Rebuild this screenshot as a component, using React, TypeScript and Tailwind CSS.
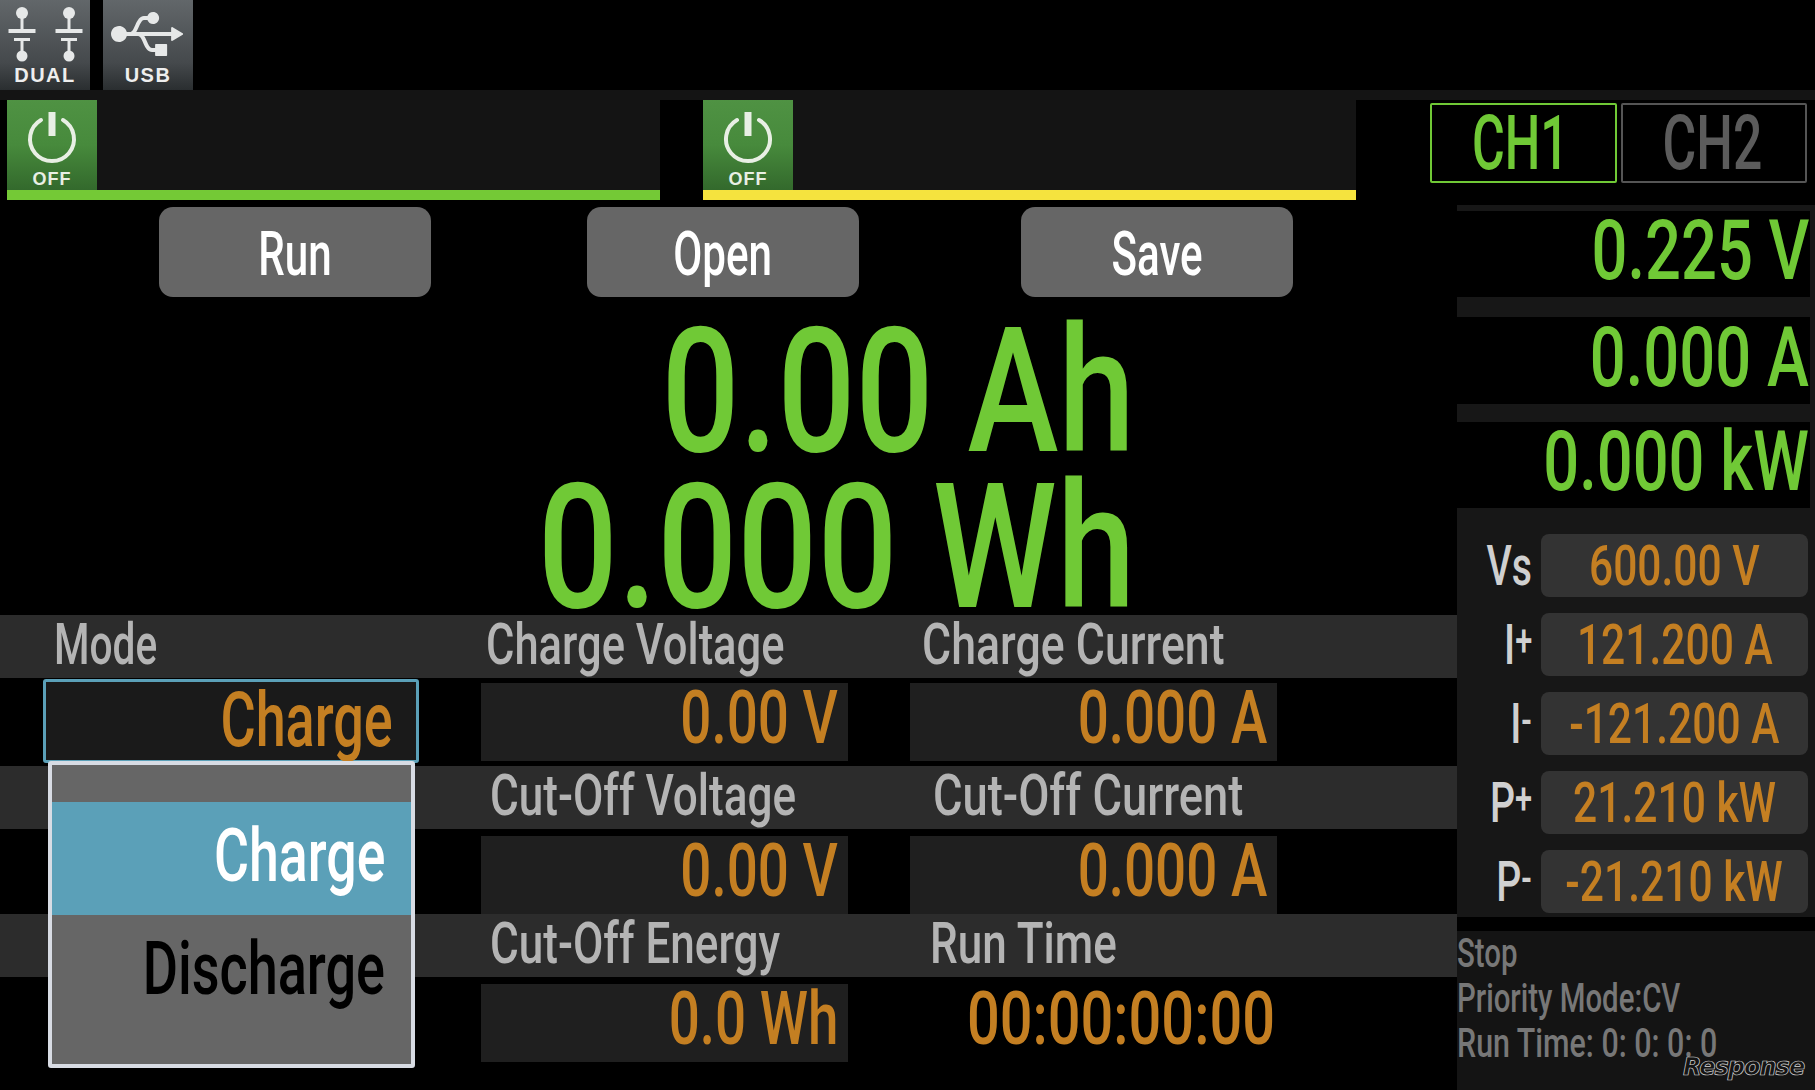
import type { ReactNode } from 'react';
import { FaUsb } from 'react-icons/fa';

const font = "font-['Roboto','Liberation_Sans',sans-serif]";

function Txt({ children, className = '' }: { children: ReactNode; className?: string }) {
  return <span className={`inline-block whitespace-nowrap font-medium ${font} ${className}`}>{children}</span>;
}

function PowerIcon() {
  return (
    <svg viewBox="0 0 56 60" className="w-[56px] h-[60px]" fill="none" stroke="#e8efe4" strokeLinecap="round">
      <path d="M17 11 A22 22 0 1 0 39 11" strokeWidth="4" />
      <path d="M28 3 V27" strokeWidth="7" strokeLinecap="butt" />
    </svg>
  );
}

function DualIcon() {
  const pole = (x: number) => (
    <g fill="#e6e8e8">
      <circle cx={x} cy={13} r={6} />
      <rect x={x - 1.5} y={14} width={3} height={17} />
      <rect x={x - 13.5} y={29} width={27} height={4} />
      <rect x={x - 8} y={38} width={16} height={3} />
      <rect x={x - 1.5} y={40} width={3} height={14} />
      <circle cx={x} cy={56} r={5.5} />
    </g>
  );
  return (
    <svg viewBox="0 0 90 68" className="absolute left-0 top-0 w-[90px] h-[68px]">
      {pole(22)}
      {pole(69)}
    </svg>
  );
}

function ModeButton({ label, icon, className = '' }: { label: string; icon: ReactNode; className?: string }) {
  return (
    <div className={`relative w-[90px] h-[90px] bg-gradient-to-b from-[#62676a] via-[#45494c] via-70% to-[#2a2e30] flex flex-col items-center justify-end pb-[3px] ${className}`}>
      {icon}
      <span className="font-['Liberation_Sans',sans-serif] font-bold text-[20px] leading-[24px] tracking-[1.5px] text-[#eeeeee]">{label}</span>
    </div>
  );
}

function ChannelBar({ barColor }: { barColor: string }) {
  return (
    <div className="w-[653px] h-[100px] flex flex-col">
      <div className="h-[90px] bg-[#141414]">
        <div className="w-[90px] h-[90px] bg-gradient-to-b from-[#4f9243] via-[#478a3c] to-[#33692c] flex flex-col items-center pt-[9px]">
          <PowerIcon />
          <span className="font-['Liberation_Sans',sans-serif] font-bold text-[18px] leading-[18px] tracking-[1px] text-[#e8efe4] mt-[1px]">OFF</span>
        </div>
      </div>
      <div className={`h-[10px] ${barColor}`} />
    </div>
  );
}

function ActionButton({ label, className = '' }: { label: string; className?: string }) {
  return (
    <div className={`w-[272px] h-[90px] rounded-[14px] bg-[#666666] flex items-center justify-center pt-[3px] ${className}`}>
      <Txt className="text-[62px] leading-none text-white scale-x-[.68]">{label}</Txt>
    </div>
  );
}

function BandRow({ cells }: { cells: { label: string; className: string; scale: string }[] }) {
  return (
    <div className="h-[63px] bg-[#2c2c2c] relative flex items-center">
      {cells.map((c) => (
        <div key={c.label} className={`shrink-0 flex ${c.className}`}>
          <Txt className={`origin-left ${c.scale} text-[58px] leading-[61px] text-[#b4b4b4] -translate-y-[2px]`}>{c.label}</Txt>
        </div>
      ))}
    </div>
  );
}

function ValueBox({ value, boxed = true }: { value: string; boxed?: boolean }) {
  return (
    <div className={`w-[367px] h-[78px] flex items-center justify-end ${boxed ? 'bg-[#1f1f1f] pr-[10px]' : 'pr-[2px]'}`}>
      <Txt className={`origin-right ${boxed ? 'scale-x-[.74]' : 'scale-x-[.78]'} text-[74px] leading-none text-[#c47f22] -translate-y-[4px]`}>{value}</Txt>
    </div>
  );
}

function Readout({ value, className = '' }: { value: string; className?: string }) {
  return (
    <div className={`w-[353px] h-[86px] bg-black flex items-center justify-end pr-[1px] ${className}`}>
      <Txt className="origin-right scale-x-[.753] text-[84px] leading-none text-[#70c936] -translate-y-[3px]">{value}</Txt>
    </div>
  );
}

function LimitRow({ label, sign, value }: { label: string; sign?: string; value: string }) {
  return (
    <div className="h-[63px] flex items-center">
      <div className="w-[75px] flex justify-end">
        <Txt className="origin-right scale-x-[.7] text-[56px] leading-none text-[#d0d0d0]">
          {label}
          {sign && <span className="text-[44px] align-[8px]">{sign}</span>}
        </Txt>
      </div>
      <div className="ml-[9px] w-[267px] h-[63px] rounded-[8px] bg-[#333333] flex items-center justify-center">
        <Txt className="scale-x-[.76] text-[56px] leading-none text-[#c47f22]">{value}</Txt>
      </div>
    </div>
  );
}

export default function App() {
  return (
    <div className="w-[1815px] h-[1090px] bg-black overflow-hidden flex flex-col">
      <div className="h-[90px] flex gap-[13px] shrink-0">
        <ModeButton label="DUAL" icon={<DualIcon />} />
        <ModeButton label="USB" icon={<FaUsb className="absolute left-[8px] top-[-2px] w-[72px] h-[72px] text-[#e6e8e8]" />} />
      </div>
      <div className="h-[10px] bg-[#141414] shrink-0" />

      <div className="flex flex-1">
        {/* left side */}
        <div className="w-[1457px] shrink-0 flex flex-col">
          <div className="h-[100px] pl-[7px] flex gap-[43px]">
            <ChannelBar barColor="bg-[#74c936]" />
            <ChannelBar barColor="bg-[#f5e33e]" />
          </div>
          <div className="mt-[7px] h-[90px] pl-[159px] flex">
            <ActionButton label="Run" />
            <ActionButton label="Open" className="ml-[156px]" />
            <ActionButton label="Save" className="ml-[162px]" />
          </div>
          <div className="h-[318px] pt-[17px] pr-[322px] flex flex-col items-end">
            <Txt className="origin-right scale-x-[.784] text-[175px] leading-[156px] text-[#70c936]">0.00 Ah</Txt>
            <Txt className="origin-right scale-x-[.806] text-[175px] leading-[156px] text-[#70c936]">0.000 Wh</Txt>
          </div>

          <BandRow
            cells={[
              { label: 'Mode', className: 'ml-[54px] w-[432px]', scale: 'scale-x-[.7]' },
              { label: 'Charge Voltage', className: 'w-[436px]', scale: 'scale-x-[.75]' },
              { label: 'Charge Current', className: 'w-[300px]', scale: 'scale-x-[.77]' },
            ]}
          />
          <div className="h-[88px] flex">
            <div className="relative ml-[43px] w-[376px] h-[84px] mt-px rounded-[3px] border-[3px] border-[#5ba0b8] bg-[#1a1a1a] flex items-center justify-end pr-[23px]">
              <Txt className="origin-right scale-x-[.71] text-[76px] leading-none text-[#c47f22] -translate-y-[1px]">Charge</Txt>
              <div className="absolute left-[2px] top-[79px] w-[367px] h-[307px] z-10 rounded-[3px] border-[4px] border-[#d8dce4] bg-[#666666] flex flex-col">
                <div className="mt-[37px] h-[113px] bg-[#5ba0b8] flex items-center justify-end pr-[26px]">
                  <Txt className="origin-right scale-x-[.725] text-[74px] leading-none text-white -translate-y-[3px]">Charge</Txt>
                </div>
                <div className="h-[113px] flex items-center justify-end pr-[26px]">
                  <Txt className="origin-right scale-x-[.73] text-[74px] leading-none text-black -translate-y-[3px]">Discharge</Txt>
                </div>
              </div>
            </div>
            <div className="ml-[62px] mt-[5px] flex gap-[62px]">
              <ValueBox value="0.00 V" />
              <ValueBox value="0.000 A" />
            </div>
          </div>

          <BandRow
            cells={[
              { label: 'Cut-Off Voltage', className: 'ml-[490px] w-[443px]', scale: 'scale-x-[.76]' },
              { label: 'Cut-Off Current', className: 'w-[320px]', scale: 'scale-x-[.78]' },
            ]}
          />
          <div className="h-[85px] pl-[481px] pt-[7px] flex gap-[62px]">
            <ValueBox value="0.00 V" />
            <ValueBox value="0.000 A" />
          </div>

          <BandRow
            cells={[
              { label: 'Cut-Off Energy', className: 'ml-[490px] w-[440px]', scale: 'scale-x-[.76]' },
              { label: 'Run Time', className: 'w-[200px]', scale: 'scale-x-[.76]' },
            ]}
          />
          <div className="pl-[481px] pt-[7px] flex gap-[62px]">
            <ValueBox value="0.0 Wh" />
            <ValueBox value="00:00:00:00" boxed={false} />
          </div>
        </div>

        {/* right side */}
        <div className="flex-1 flex flex-col">
          <div className="h-[105px] pt-[3px] -ml-[27px] flex gap-[4px]">
            <div className="w-[187px] h-[80px] rounded-[2px] border-2 border-[#70c936] flex items-center justify-center pr-[6px]">
              <Txt className="scale-x-[.66] text-[76px] leading-none text-[#70c936]">CH1</Txt>
            </div>
            <div className="w-[186px] h-[80px] rounded-[2px] border-2 border-[#555555] flex items-center justify-center pr-[4px]">
              <Txt className="scale-x-[.68] text-[76px] leading-none text-[#5c5c5c]">CH2</Txt>
            </div>
          </div>

          <div className="h-[712px] bg-[#171717] pt-[6px] flex flex-col">
            <Readout value="0.225 V" />
            <Readout value="0.000 A" className="mt-[20px] h-[87px]" />
            <Readout value="0.000 kW" className="mt-[18px]" />
            <div className="mt-[26px] flex flex-col gap-[16px]">
              <LimitRow label="Vs" value="600.00 V" />
              <LimitRow label="I" sign="+" value="121.200 A" />
              <LimitRow label="I" sign="-" value="-121.200 A" />
              <LimitRow label="P" sign="+" value="21.210 kW" />
              <LimitRow label="P" sign="-" value="-21.210 kW" />
            </div>
          </div>

          <div className="mt-[14px] flex-1 bg-[#141414] relative flex flex-col items-start">
            <Txt className="origin-left scale-x-[.735] text-[40px] leading-[45px] text-[#777777]">Stop</Txt>
            <Txt className="origin-left scale-x-[.735] text-[40px] leading-[45px] text-[#777777]">Priority Mode:CV</Txt>
            <Txt className="origin-left scale-x-[.76] text-[40px] leading-[45px] text-[#777777]">Run Time: 0: 0: 0: 0</Txt>
            <span className="absolute left-[226px] top-[124px] font-['DejaVu_Sans',sans-serif] italic font-bold text-[24px] leading-none tracking-[-1px] text-transparent [-webkit-text-stroke:0.7px_#d8d8d8]">Response</span>
          </div>
        </div>
      </div>
    </div>
  );
}
